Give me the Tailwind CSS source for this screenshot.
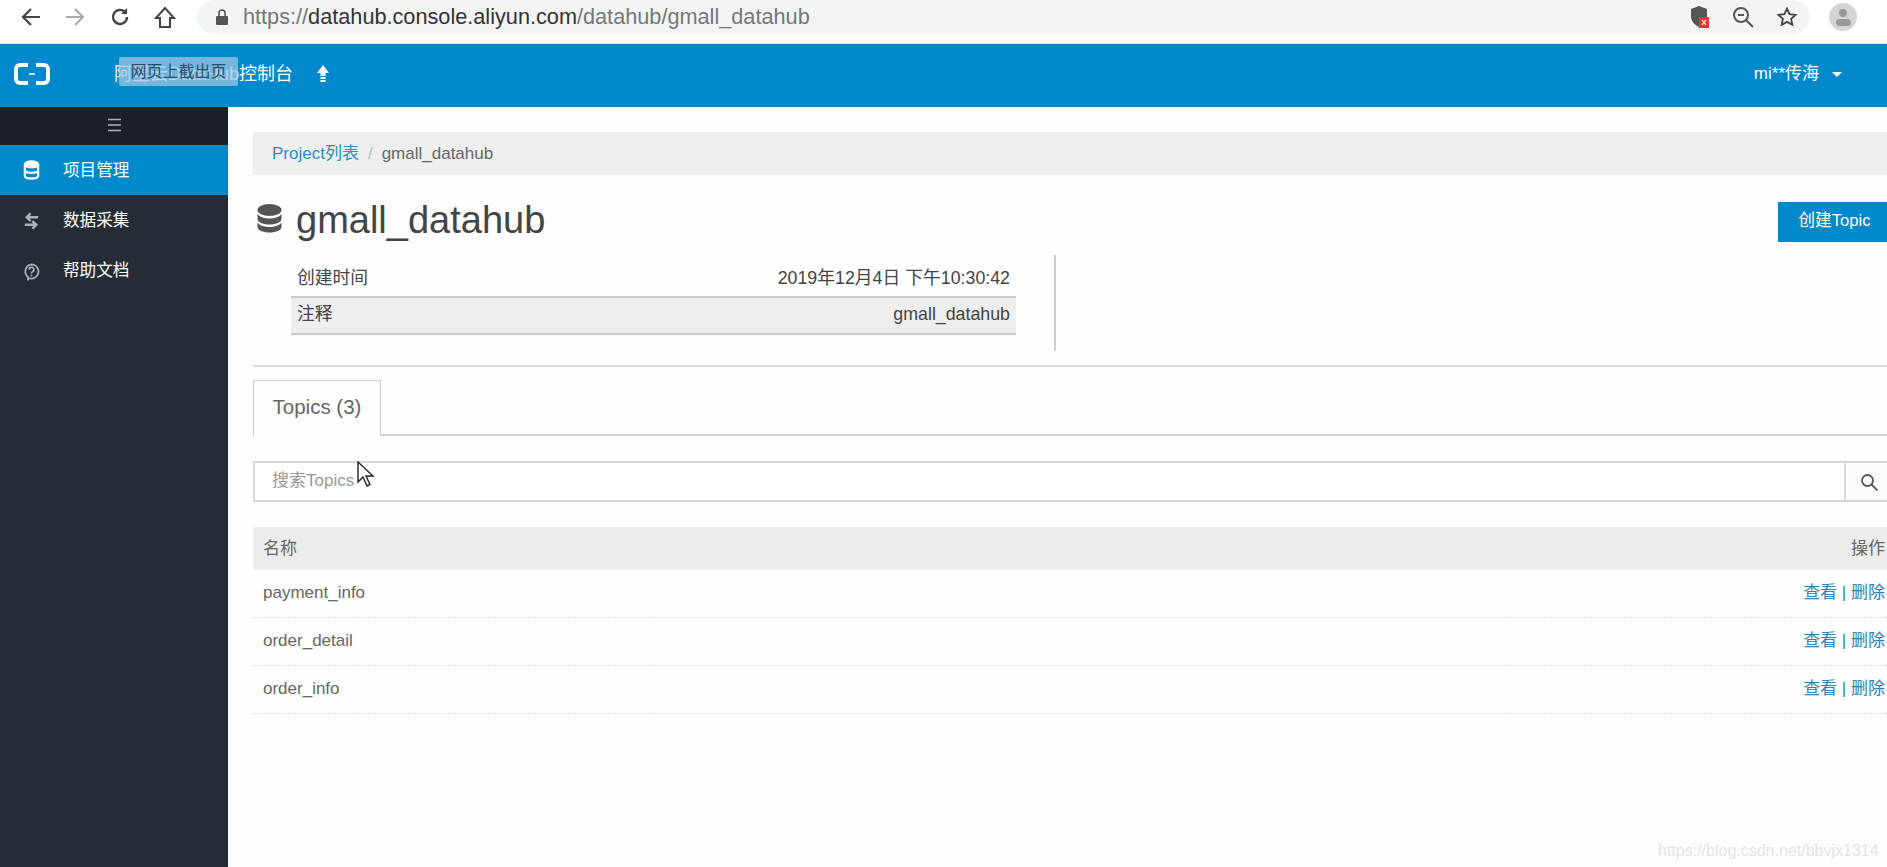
<!DOCTYPE html>
<html lang="zh-CN">
<head>
  <meta charset="UTF-8" />
  <title>gmall_datahub</title>
  <script src="https://cdn.jsdelivr.net/npm/@tailwindcss/browser@4"></script>
</head>
<body class="h-[867px] w-[1887px] overflow-hidden bg-[#fdfefd] text-[#555] font-['Liberation_Sans','Noto_Sans_CJK_SC',sans-serif]">
<!-- Browser bar -->
<div class="h-[44px] flex items-start bg-white border-b border-[#d8e6ee]">
  <div class="w-[197px] h-[34px] flex items-center pl-[20px] gap-[24px] text-[#444]">
    <svg class="w-[22px] h-[22px]" viewBox="0 0 22 22" fill="none" stroke="#444" stroke-width="2.200"><path d="M20 11H3M11 3l-8 8 8 8"/></svg>
    <svg class="w-[22px] h-[22px] -ml-[2px]" viewBox="0 0 22 22" fill="none" stroke="#aaa" stroke-width="2.200"><path d="M2 11h17M11 3l8 8-8 8"/></svg>
    <svg class="w-[22px] h-[22px] -ml-[1px]" viewBox="0 0 22 22" fill="none" stroke="#444" stroke-width="2.400"><path d="M18 11a7 7 0 1 1-2-5"/><path d="M18 2v6h-6" fill="#444" stroke="none"/></svg>
    <svg class="w-[24px] h-[24px] -ml-[2px]" viewBox="0 0 24 24" fill="none" stroke="#444" stroke-width="2"><path d="M12 3L3 13h4v9h10v-9h4z"/></svg>
  </div>
  <div class="flex-1 h-[34px] mr-[19px] bg-[#f3f4f4] rounded-[17px] flex items-center pl-[18px] pr-[12px] text-[21.7px]">
    <svg class="w-[14px] h-[18px]" viewBox="0 0 14 18" fill="#555"><path d="M2 8h10a1 1 0 0 1 1 1v7a1 1 0 0 1-1 1H2a1 1 0 0 1-1-1V9a1 1 0 0 1 1-1z"/><path d="M4 8V5a3 3 0 0 1 6 0v3" fill="none" stroke="#555" stroke-width="1.600"/></svg>
    <span class="ml-[14px] text-[#777]">https://<span class="text-[#333]">datahub.console.aliyun.com</span>/datahub/gmall_datahub</span>
    <div class="ml-auto flex items-center gap-[22px]">
      <svg class="w-[20px] h-[24px]" viewBox="0 0 20 24"><path d="M9 1l8 3v7c0 6-4 9-8 11-4-2-8-5-8-11V4z" fill="#555"/><rect x="9" y="12" width="10" height="11" fill="#e53935"/><path d="M12 15l4 5M16 15l-4 5" stroke="#fff" stroke-width="1.200"/></svg>
      <svg class="w-[22px] h-[22px]" viewBox="0 0 22 22" fill="none" stroke="#555" stroke-width="2"><circle cx="9" cy="9" r="7"/><path d="M14 14l7 7M6 9h6"/></svg>
      <svg class="w-[22px] h-[22px]" viewBox="0 0 24 24" fill="none" stroke="#444" stroke-width="2"><path d="M12 3l2.800 6 6.500.7-4.800 4.400 1.300 6.400-5.800-3.200-5.800 3.200 1.300-6.400L2.700 9.700 9.200 9z"/></svg>
    </div>
  </div>
  <div class="w-[28px] h-[28px] mr-[30px] mt-[3px] rounded-full bg-[#d5d5d5] flex flex-col items-center justify-center gap-[2px]">
    <span class="w-[8px] h-[8px] rounded-full bg-[#999]"></span>
    <span class="w-[15px] h-[7px] rounded-full bg-[#999]"></span>
  </div>
</div>
<!-- Top header -->
<header class="relative h-[63px] pb-[3px] bg-[#0088cc] flex items-center text-white">
  <svg class="ml-[14px] w-[36px] h-[24px]" viewBox="0 0 36 24" fill="none" stroke="#fff" stroke-width="4"><path d="M14 3H6a4 4 0 0 0-4 4v10a4 4 0 0 0 4 4h8M22 3h8a4 4 0 0 1 4 4v10a4 4 0 0 1-4 4h-8"/><path d="M15 12h6" stroke-width="1.500"/></svg>
  <span class="ml-[64px] text-[18px]">阿里云DataHub控制台</span>
  <!-- selection tooltip over the product name -->
  <div class="absolute left-[119px] top-[13px] w-[119px] h-[29px] bg-[#9cc6e0]/75 rounded-[2px] text-[#24506e] text-[16px] leading-[29px] text-center">网页上截出页</div>
  <svg class="ml-[23px] w-[14px] h-[20px]" viewBox="0 0 14 20" fill="#fff"><path d="M7 1l6 8H9.500v3h-5V9H1zM4.500 13h5v2h-5zM4.500 16h5v2h-5z"/></svg>
  <div class="ml-auto mr-[45px] flex items-center text-[17px]">
    <span>mi**传海</span>
    <span class="ml-[13px] w-0 h-0 border-x-[5px] border-x-transparent border-t-[5px] border-t-white"></span>
  </div>
</header>
<div class="flex h-[760px]">
  <!-- Sidebar -->
  <aside class="w-[228px] shrink-0 bg-[#252c35] text-white text-[16.6px]">
    <div class="h-[38px] pb-[3px] bg-[#1b2026] flex items-center justify-center">
      <svg class="w-[13px] h-[16px]" viewBox="0 0 14 16" stroke="#aeb3b8" stroke-width="1.600"><path d="M0 2h14M0 8h14M0 14h14"/></svg>
    </div>
    <a class="h-[50px] flex items-center bg-[#0088cc]">
      <svg class="ml-[23px] w-[17px] h-[20px]" viewBox="0 0 18 20" fill="none" stroke="#fff" stroke-width="2.400"><ellipse cx="9" cy="4" rx="7" ry="3" fill="#fff"/><path d="M2 4v12c0 2 3 3 7 3s7-1 7-3V4M2 10c0 2 3 3 7 3s7-1 7-3"/></svg>
      <span class="ml-[23px] pt-[2px]">项目管理</span>
    </a>
    <a class="h-[51px] flex items-center">
      <svg class="ml-[23px] w-[17px] h-[18px]" viewBox="0 0 18 18" fill="none" stroke="#aeb3b8" stroke-width="2.600"><path d="M16 5H4M8 1L4 5l4 4M2 13h12M10 9l4 4-4 4"/></svg>
      <span class="ml-[23px] pt-[2px]">数据采集</span>
    </a>
    <a class="h-[51px] flex items-center">
      <svg class="ml-[23px] w-[17px] h-[20px]" viewBox="0 0 18 20" fill="none" stroke="#aeb3b8" stroke-width="1.800"><path d="M9 2a7.500 7.500 0 1 1-3 14.400L5 19l.6-3.500A7.500 7.500 0 0 1 9 2z"/><path d="M6.500 7.500a2.500 2.500 0 1 1 3.500 2.300c-.7.300-1 .7-1 1.700M9 13v1.500"/></svg>
      <span class="ml-[23px]">帮助文档</span>
    </a>
  </aside>
  <!-- Main -->
  <main class="flex-1 pl-[25px] pt-[25px] min-w-0">
    <nav class="h-[43px] bg-[#eef0ef] flex items-center pl-[19px] text-[17px]">
      <a class="text-[#2a8fc4]">Project列表</a>
      <span class="mx-[9px] text-[#bbb]">/</span>
      <span class="text-[#666]">gmall_datahub</span>
    </nav>
    <div class="h-[80px] pt-[13px] flex items-center">
      <svg class="ml-[4px] -mt-[2px] w-[25px] h-[33px]" viewBox="0 0 25 33" fill="#555"><ellipse cx="12.500" cy="6" rx="12" ry="6"/><path d="M.5 10c2 3 7 4.500 12 4.500s10-1.500 12-4.500v5c0 3-5 5.500-12 5.500S.5 18 .5 15zM.5 18.500c2 3 7 4.500 12 4.500s10-1.500 12-4.500V23c0 3-5 5.500-12 5.500S.5 26 .5 23z"/></svg>
      <h1 class="ml-[14px] -mt-[4px] text-[38px] text-[#444] leading-none">gmall_datahub</h1>
      <button class="ml-auto h-[40px] w-[109px] pl-[4px] bg-[#0088cc] text-white text-[16.6px] text-center">创建Topic</button>
    </div>
    <div class="flex h-[97px] pb-[1px]">
      <div class="ml-[38px] w-[725px] text-[17.8px] text-[#444]">
        <div class="h-[43px] pt-[5px] px-[6px] flex items-center justify-between border-b-2 border-[#c9cbca]">
          <span>创建时间</span><span>2019年12月4日 下午10:30:42</span>
        </div>
        <div class="h-[37px] pb-[2px] px-[6px] flex items-center justify-between bg-[#eeeeee] border-b-2 border-[#c9cbca]">
          <span>注释</span><span>gmall_datahub</span>
        </div>
      </div>
      <div class="ml-[38px] w-[2px] bg-[#ccc]"></div>
    </div>
    <div class="mt-[13px] h-[2px] bg-[#d9d9d9]"></div>
    <div class="mt-[13px] h-[56px] border-b-2 border-[#d0d2d1]">
      <div class="w-[128px] h-[56px] pb-[2px] bg-[#fdfefd] border border-b-0 border-[#d0d2d1] text-[20.5px] text-[#666] flex items-center justify-center">Topics (3)</div>
    </div>
    <div class="mt-[25px] h-[41px] flex border-2 border-[#d6d8d7] border-r-0 bg-white text-[17px]">
      <input class="flex-1 pl-[17px] pb-[2px] outline-none placeholder:text-[#999]" placeholder="搜索Topics" />
      <div class="w-[43px] border-l-2 border-[#d6d8d7] bg-[#fafafa] flex items-center pl-[14px]">
        <svg class="w-[18px] h-[18px]" viewBox="0 0 18 18" fill="none" stroke="#555" stroke-width="1.800"><circle cx="7.500" cy="7.500" r="5.500"/><path d="M11.500 11.500l6 6"/></svg>
      </div>
    </div>
    <div class="mt-[25px] h-[43px] bg-[#ececec] flex items-center justify-between pl-[10px] pr-[2px] text-[17px] text-[#666]">
      <span>名称</span><span>操作</span>
    </div>
    <div class="h-[48px] pb-[2px] border-b border-dashed border-[#ddd] flex items-center justify-between pl-[10px] pr-[2px] text-[17px] text-[#666]">
      <span>payment_info</span>
      <span class="text-[#2a85b8]">查看 | 删除</span>
    </div>
    <div class="h-[48px] pb-[2px] border-b border-dashed border-[#ddd] flex items-center justify-between pl-[10px] pr-[2px] text-[17px] text-[#666]">
      <span>order_detail</span>
      <span class="text-[#2a85b8]">查看 | 删除</span>
    </div>
    <div class="h-[48px] pb-[2px] border-b border-dashed border-[#ddd] flex items-center justify-between pl-[10px] pr-[2px] text-[17px] text-[#666]">
      <span>order_info</span>
      <span class="text-[#2a85b8]">查看 | 删除</span>
    </div>
  </main>
</div>
<!-- Mouse pointer and watermark lie over the page -->
<svg class="absolute left-[357px] top-[461px] w-[18px] h-[27px]" viewBox="0 0 18 27" fill="#fff" stroke="#222" stroke-width="1.400"><path d="M1 1v20l5-5 4 9 3-1.500-4-8.500h7z"/></svg>
<div class="absolute left-[1658px] top-[839px] text-[16px] text-[#e4e4e4]">https://blog.csdn.net/bbvjx1314</div>
</body>
</html>
